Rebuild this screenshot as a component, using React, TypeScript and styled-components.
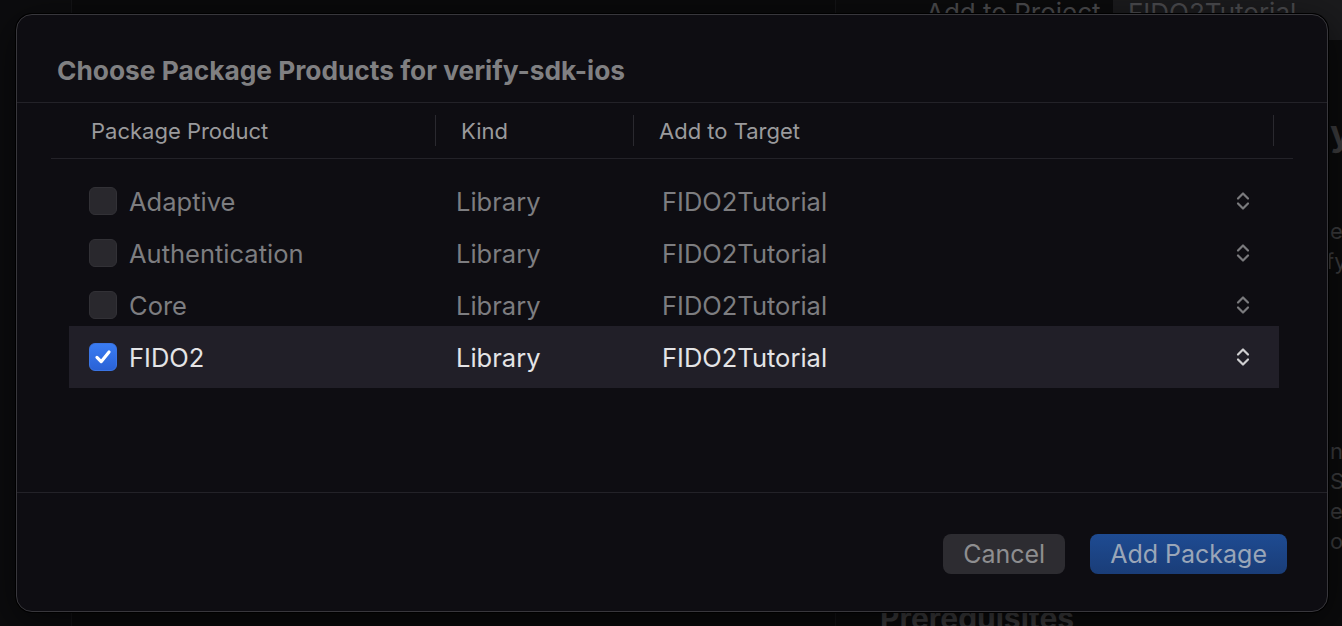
import styled, { createGlobalStyle } from "styled-components"

const GlobalStyle = createGlobalStyle`
	html, body {
		margin: 0;
		padding: 0;
		background: #0a0a0b;
	}
	body {
		font-family: Inter, "Noto Sans", sans-serif;
		overflow: hidden;
	}
`

interface Product {
	name: string
	kind: string
	target: string
	checked: boolean
}

const products: Product[] = [
	{ name: "Adaptive", kind: "Library", target: "FIDO2Tutorial", checked: false },
	{ name: "Authentication", kind: "Library", target: "FIDO2Tutorial", checked: false },
	{ name: "Core", kind: "Library", target: "FIDO2Tutorial", checked: false },
	{ name: "FIDO2", kind: "Library", target: "FIDO2Tutorial", checked: true },
]

function UpDownIcon() {
	return (
		<svg width="14" height="22" viewBox="0 0 14 22" fill="none">
			<path d="M2 8.5 L7 3.5 L12 8.5" stroke="currentColor" strokeWidth="2.2" strokeLinecap="round" strokeLinejoin="round" />
			<path d="M2 13.5 L7 18.5 L12 13.5" stroke="currentColor" strokeWidth="2.2" strokeLinecap="round" strokeLinejoin="round" />
		</svg>
	)
}

function CheckIcon() {
	return (
		<svg width="28" height="28" viewBox="0 0 28 28" fill="none">
			<path d="M7.5 14.5 L12 19 L20.5 8.5" stroke="#fff" strokeWidth="3.4" strokeLinecap="round" strokeLinejoin="round" />
		</svg>
	)
}

export default function App() {
	return (
		<Screen>
			<GlobalStyle />
			<Sidebar />
			<Editor />
			<Inspector>
				<TopFields>
					<FieldLabel>Add to Project</FieldLabel>
					<FieldBox>FIDO2Tutorial</FieldBox>
				</TopFields>
				<DocBody>
					<DocLine $indent={450} $mt={72} $size={36} $bold>
						y
					</DocLine>
					<DocLine $indent={450} $mt={62}>
						ep
					</DocLine>
					<DocLine $indent={446}>fy</DocLine>
					<DocLine $indent={450} $mt={160}>
						n
					</DocLine>
					<DocLine $indent={450}>S</DocLine>
					<DocLine $indent={450}>e</DocLine>
					<DocLine $indent={450}>o</DocLine>
					<DocLine $mt={44} $size={30} $bold>
						Prerequisites
					</DocLine>
				</DocBody>
			</Inspector>

			<Dialog>
				<TitleBar>
					<Title>Choose Package Products for verify-sdk-ios</Title>
				</TitleBar>
				<Table>
					<HeaderRow>
						<HeaderCell $first>Package Product</HeaderCell>
						<HeaderCell>Kind</HeaderCell>
						<HeaderCell>Add to Target</HeaderCell>
						<div />
					</HeaderRow>
					<RowList>
						{products.map(p => (
							<Row key={p.name} $selected={p.checked}>
								<NameCell>
									<Checkbox $checked={p.checked}>{p.checked && <CheckIcon />}</Checkbox>
									{p.name}
								</NameCell>
								<div>{p.kind}</div>
								<div>{p.target}</div>
								<Stepper $selected={p.checked}>
									<UpDownIcon />
								</Stepper>
							</Row>
						))}
					</RowList>
				</Table>
				<Footer>
					<Button>Cancel</Button>
					<Button $primary>Add Package</Button>
				</Footer>
			</Dialog>
		</Screen>
	)
}

const Screen = styled.div`
	position: relative;
	width: 1342px;
	height: 626px;
	overflow: hidden;
	display: grid;
	grid-template-columns: 72px 764px 1fr;
	background: #0a0a0b;
`
const Sidebar = styled.div`
	background: #0c0c0e;
	border-right: 1px solid #141416;
`
const Editor = styled.div`
	background: #0a0a0b;
	border-right: 1px solid #141416;
`
const Inspector = styled.div`
	display: flex;
	flex-direction: column;
	background: #0b0b0c;
	color: #3c3c3e;
	white-space: nowrap;
`
const TopFields = styled.div`
	display: grid;
	grid-template-columns: 277px 1fr;
	height: 40px;
	font-size: 26px;
	line-height: 26px;
	color: #4a4a4d;
`
const FieldLabel = styled.div`
	padding-left: 90px;
`
const FieldBox = styled.div`
	background: #1b1b1d;
	padding-left: 15px;
`
const DocBody = styled.div`
	display: flex;
	flex-direction: column;
	padding-left: 44px;
`
const DocLine = styled.div<{ $indent?: number; $mt?: number; $size?: number; $bold?: boolean }>`
	padding-left: ${({ $indent }) => $indent ?? 0}px;
	margin-top: ${({ $mt }) => $mt ?? 0}px;
	font-size: ${({ $size }) => $size ?? 22}px;
	line-height: ${({ $size }) => ($size ? $size + 6 : 30)}px;
	font-weight: ${({ $bold }) => ($bold ? 700 : 400)};
`

const Dialog = styled.div`
	position: absolute;
	left: 16px;
	top: 14px;
	width: 1312px;
	height: 598px;
	box-sizing: border-box;
	display: flex;
	flex-direction: column;
	background: #0e0d12;
	border: 1px solid #38373c;
	border-radius: 16px;
	box-shadow: 0 0 0 1px #000, 0 10px 40px rgb(0 0 0 / 60%);
	overflow: hidden;
`
const TitleBar = styled.div`
	box-sizing: border-box;
	height: 88px;
	padding: 40px 40px 0;
	border-bottom: 1px solid #232228;
`
const Title = styled.h1`
	margin: 0;
	font-size: 26.3px;
	line-height: 32px;
	font-weight: 700;
	color: #808082;
`
const Table = styled.div`
	flex: 1;
	padding: 0 34px;
`
const HeaderRow = styled.div`
	box-sizing: border-box;
	height: 56px;
	display: grid;
	grid-template-columns: 385px 198px 640px 1fr;
	align-items: center;
	border-bottom: 1px solid #232228;
`
const HeaderCell = styled.div<{ $first?: boolean }>`
	height: 31px;
	display: flex;
	align-items: center;
	padding-left: ${({ $first }) => ($first ? 40 : 25)}px;
	border-right: 1px solid #2a292f;
	font-size: 22px;
	color: #9a9a9c;
`
const RowList = styled.div`
	display: flex;
	flex-direction: column;
	padding: 16px 14px 0 18px;
`
const Row = styled.div<{ $selected?: boolean }>`
	height: ${({ $selected }) => ($selected ? 62 : 52)}px;
	margin-top: ${({ $selected }) => ($selected ? -5 : 0)}px;
	display: grid;
	grid-template-columns: 367px 206px 1fr auto;
	align-items: center;
	padding: 0 29px 0 20px;
	background: ${({ $selected }) => ($selected ? "#211f28" : "transparent")};
	font-size: 25.5px;
	color: ${({ $selected }) => ($selected ? "#e4e4e6" : "#7d7d80")};
`
const NameCell = styled.div`
	display: flex;
	align-items: center;
	gap: 12px;
`
const Checkbox = styled.div<{ $checked?: boolean }>`
	width: 28px;
	height: 28px;
	box-sizing: border-box;
	border-radius: 6px;
	display: flex;
	align-items: center;
	justify-content: center;
	background: ${({ $checked }) => ($checked ? "linear-gradient(#3a7cf2, #2a62d6)" : "#29282d")};
	border: 1px solid ${({ $checked }) => ($checked ? "#3a74e4" : "#323136")};
`
const Stepper = styled.div<{ $selected?: boolean }>`
	display: flex;
	color: ${({ $selected }) => ($selected ? "#cfcfd1" : "#7a7a7d")};
`
const Footer = styled.div`
	box-sizing: border-box;
	height: 119px;
	display: flex;
	justify-content: flex-end;
	align-items: flex-start;
	gap: 25px;
	padding: 41px 40px 0;
	border-top: 1px solid #232228;
`
const Button = styled.button<{ $primary?: boolean }>`
	height: 40px;
	padding: 0 20px;
	border: none;
	border-radius: 8px;
	font-family: inherit;
	font-size: 25px;
	color: ${({ $primary }) => ($primary ? "#9aa6b8" : "#8e8e90")};
	background: ${({ $primary }) => ($primary ? "linear-gradient(#1e4b92, #1a3d78)" : "#2d2c31")};
`
